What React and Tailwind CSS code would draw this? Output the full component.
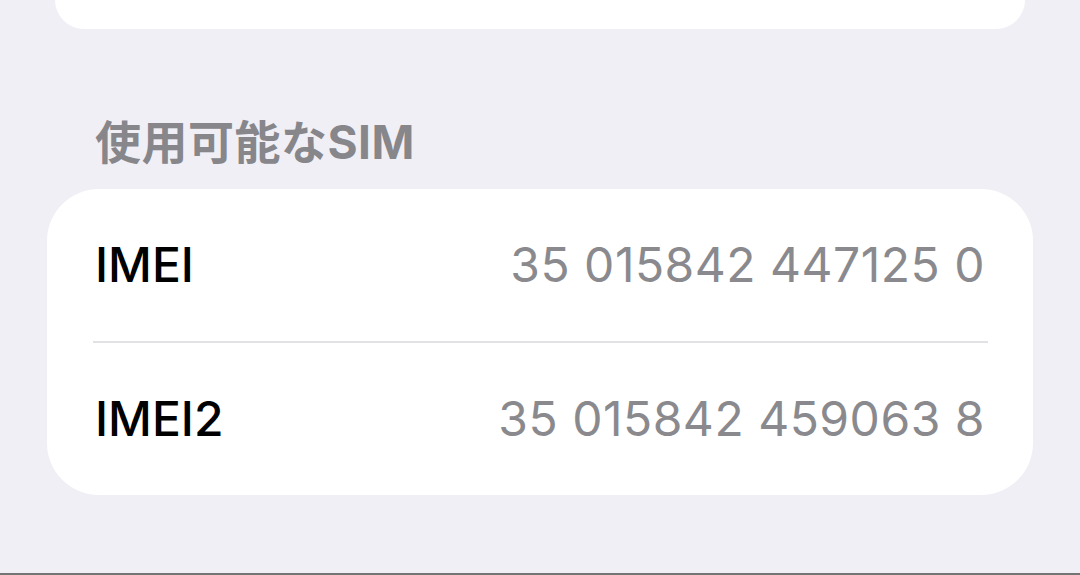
import React from "react";

const rows = [
  { label: "IMEI", value: "35 015842 447125 0" },
  { label: "IMEI2", value: "35 015842 459063 8" },
];

const font = { fontFamily: '"Inter", "Noto Sans CJK JP", sans-serif' };

const App = () => {
  return (
    <div className="h-[575px] w-[1080px] bg-[#f0eff5] flex flex-col overflow-hidden" style={font}>
      <div className="h-[29px] mx-[55px] bg-white rounded-b-[60px]" />

      <h2 className="mt-[86px] ml-[95px] text-[46px] leading-[54px] font-bold tracking-[0.5px] text-[#86868b]">
        使用可能なSIM
      </h2>

      <div className="mt-[20px] mx-[47px] bg-white rounded-[52px]">
        {rows.map((row, i) => (
          <div key={row.label}>
            {i > 0 && <div className="ml-[46px] mr-[45px] h-[2px] bg-[#e2e2e6]" />}
            <div className="h-[152px] px-[48px] flex items-center justify-between">
              <span className="text-[48px] font-medium text-black">{row.label}</span>
              <span className="text-[48px] tracking-[0.5px] text-[#8a8a8e]">{row.value}</span>
            </div>
          </div>
        ))}
      </div>

      <div className="flex-1" />
      <div className="h-[2px] bg-[#747474]" />
    </div>
  );
};

export default App;
